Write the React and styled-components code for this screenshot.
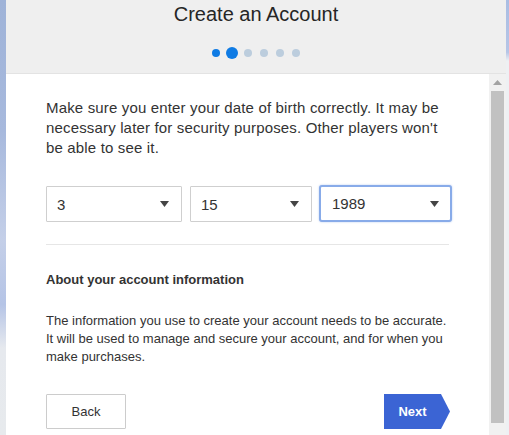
import React from "react";
import styled, { createGlobalStyle } from "styled-components";

const Global = createGlobalStyle`
  html, body { margin: 0; padding: 0; }
  body {
    font-family: "Liberation Sans", Arial, sans-serif;
    background: #e4e8ee;
    overflow: hidden;
  }
`;

const Screen = styled.div`
  display: flex;
  width: 509px;
  height: 435px;
  overflow: hidden;
`;

const Edge = styled.div`
  width: ${(p) => p.$w}px;
  flex: none;
  background: ${(p) => p.$bg};
`;

const Panel = styled.div`
  width: 500px;
  flex: none;
  display: flex;
  flex-direction: column;
  background: #fff;
`;

const Header = styled.header`
  height: 73px;
  flex: none;
  background: #efefef;
  border-bottom: 1px solid #e3e3e3;
  display: flex;
  flex-direction: column;
  align-items: center;
`;

const Title = styled.h1`
  margin: 0;
  padding-top: 2px;
  font-size: 20px;
  line-height: 24px;
  font-weight: 400;
  color: #262626;
`;

const Dots = styled.div`
  display: flex;
  align-items: center;
  gap: 8px;
  margin-top: 21px;
`;

const Dot = styled.span`
  width: ${(p) => (p.$big ? 12 : 8)}px;
  height: ${(p) => (p.$big ? 12 : 8)}px;
  margin: 0 ${(p) => (p.$big ? -2 : 0)}px;
  border-radius: 50%;
  background: ${(p) => (p.$on ? "#0f7be4" : "#bccddd")};
`;

const BodyRow = styled.div`
  flex: 1;
  display: flex;
  min-height: 0;
`;

const Content = styled.main`
  flex: 1;
  padding: 24px 39px 0 40px;
  color: #333;
`;

const Lead = styled.p`
  margin: 0;
  font-size: 15px;
  line-height: 20px;
  letter-spacing: 0.16px;
  color: #333;
`;

const Selects = styled.div`
  display: grid;
  grid-template-columns: 136px 122px 1fr;
  gap: 8px;
  margin-top: 28px;
`;

const SelectBox = styled.div`
  height: ${(p) => (p.$focus ? 37 : 36)}px;
  box-sizing: border-box;
  display: flex;
  align-items: center;
  justify-content: space-between;
  margin: ${(p) => (p.$focus ? "-1px -2px 0 -1px" : "0")};
  padding: 0 ${(p) => (p.$focus ? 11 : 12)}px 0 ${(p) => (p.$focus ? 11 : 10)}px;
  border: ${(p) => (p.$focus ? "2px solid #88abe9" : "1px solid #cfcfcf")};
  border-radius: ${(p) => (p.$focus ? 3 : 1)}px;
  box-shadow: ${(p) => (p.$focus ? "0 0 2px rgba(80,130,220,0.45)" : "none")};
  font-size: 15px;
  color: #333;
  background: #fff;
`;

const Caret = () => (
  <svg width="9" height="6" viewBox="0 0 9 6">
    <path d="M0 0 H9 L4.5 6 Z" fill="#444" />
  </svg>
);

const Divider = styled.hr`
  margin: 22px 1px 0 0;
  border: 0;
  border-top: 1px solid #e6e6e6;
`;

const Heading = styled.h2`
  margin: 27px 0 0;
  font-size: 13px;
  line-height: 16px;
  font-weight: 700;
  color: #333;
`;

const Info = styled.p`
  margin: 24px 0 0;
  font-size: 13px;
  line-height: 18px;
  color: #333;
`;

const Actions = styled.div`
  display: flex;
  justify-content: space-between;
  align-items: center;
  margin-top: 28px;
`;

const BackButton = styled.button`
  width: 80px;
  height: 35px;
  box-sizing: border-box;
  background: #fff;
  border: 1px solid #cccccc;
  border-radius: 1px;
  font-family: inherit;
  font-size: 13px;
  color: #333;
  padding: 0;
`;

const NextButton = styled.button`
  width: 66px;
  height: 35px;
  box-sizing: border-box;
  border: 0;
  background: #3b64d4;
  clip-path: polygon(0 0, 57px 0, 66px 50%, 57px 100%, 0 100%);
  color: #fff;
  font-family: inherit;
  font-weight: 700;
  font-size: 13px;
  padding: 0 9px 0 0;
`;

const Scrollbar = styled.div`
  width: 17px;
  flex: none;
  display: flex;
  flex-direction: column;
  align-items: center;
  background: #f1f1f1;
  padding-bottom: 12px;
  box-sizing: border-box;
`;

const ArrowUp = styled.div`
  height: 17px;
  display: flex;
  align-items: center;
  justify-content: center;
`;

const Thumb = styled.div`
  width: 13px;
  flex: 1;
  background: #c1c1c1;
`;

export default function App() {
  return (
    <>
      <Global />
      <Screen>
        <Edge $w={6} $bg="linear-gradient(180deg,#9fb3d8 0%,#a7b9dd 30%,#c4cfe8 55%,#b5c4e6 70%,#e6e9ee 80%,#e7eaed 100%)" />
        <Panel>
          <Header>
            <Title>Create an Account</Title>
            <Dots>
              <Dot $on />
              <Dot $on $big />
              <Dot />
              <Dot />
              <Dot />
              <Dot />
            </Dots>
          </Header>
          <BodyRow>
            <Content>
              <Lead>
                Make sure you enter your date of birth correctly. It may be
                necessary later for security purposes. Other players won't be
                able to see it.
              </Lead>
              <Selects>
                <SelectBox>
                  <span>3</span>
                  <Caret />
                </SelectBox>
                <SelectBox>
                  <span>15</span>
                  <Caret />
                </SelectBox>
                <SelectBox $focus>
                  <span>1989</span>
                  <Caret />
                </SelectBox>
              </Selects>
              <Divider />
              <Heading>About your account information</Heading>
              <Info>
                The information you use to create your account needs to be
                accurate. It will be used to manage and secure your account,
                and for when you make purchases.
              </Info>
              <Actions>
                <BackButton>Back</BackButton>
                <NextButton>Next</NextButton>
              </Actions>
            </Content>
            <Scrollbar>
              <ArrowUp>
                <svg width="9" height="5" viewBox="0 0 9 5">
                  <path d="M0 5 L4.5 0 L9 5 Z" fill="#a3a3a3" />
                </svg>
              </ArrowUp>
              <Thumb />
            </Scrollbar>
          </BodyRow>
        </Panel>
        <Edge $w={3} $bg="linear-gradient(180deg,#a9bde3 0%,#b6c5e6 12%,#eef0f3 14%,#eef0f3 100%)" />
      </Screen>
    </>
  );
}
